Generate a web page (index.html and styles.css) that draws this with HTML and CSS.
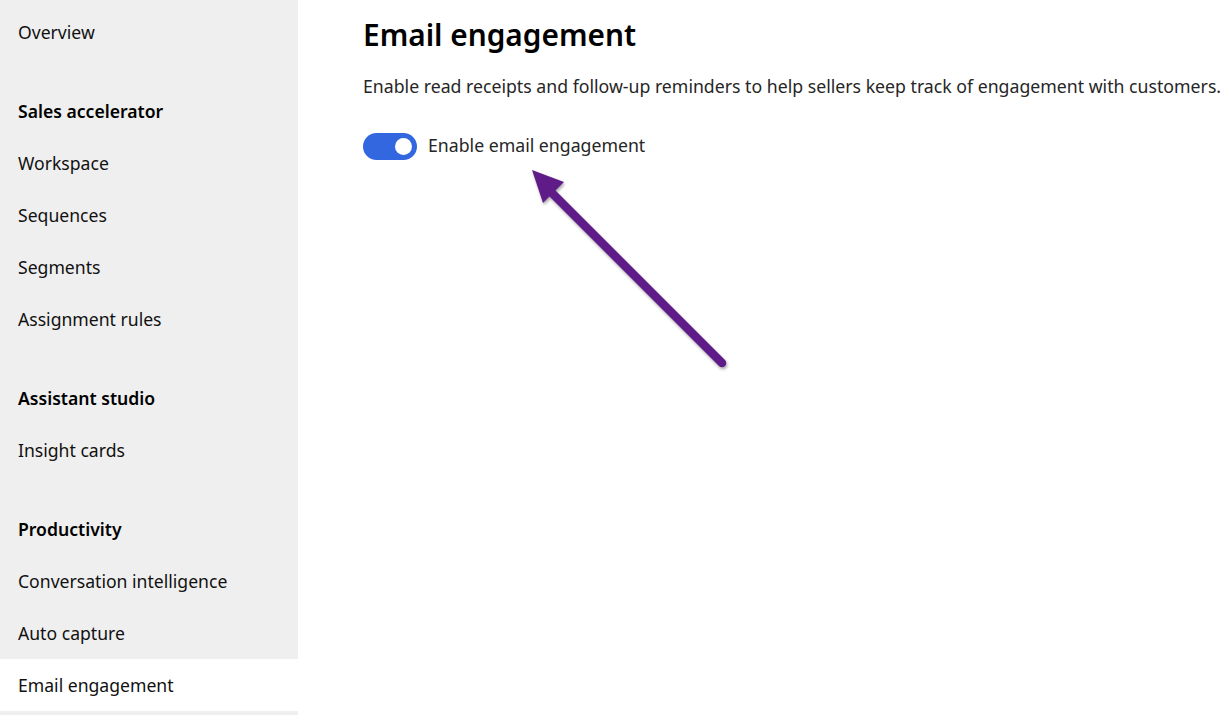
FILE: index.html
```html
<!DOCTYPE html>
<html lang="en">
<head>
<meta charset="utf-8">
<title>Email engagement</title>
<link rel="stylesheet" href="styles.css">
</head>
<body>
<div class="app">
  <nav class="sidebar">
    <div class="group first">
      <div class="item">Overview</div>
    </div>
    <div class="group">
      <div class="item header">Sales accelerator</div>
      <div class="item">Workspace</div>
      <div class="item">Sequences</div>
      <div class="item">Segments</div>
      <div class="item">Assignment rules</div>
    </div>
    <div class="group">
      <div class="item header">Assistant studio</div>
      <div class="item">Insight cards</div>
    </div>
    <div class="group">
      <div class="item header">Productivity</div>
      <div class="item">Conversation intelligence</div>
      <div class="item">Auto capture</div>
      <div class="item selected">Email engagement</div>
    </div>
  </nav>
  <main class="content">
    <h1 class="title">Email engagement</h1>
    <p class="desc">Enable read receipts and follow-up reminders to help sellers keep track of engagement with customers.</p>
    <div class="toggle-row">
      <span class="toggle"><span class="knob"></span></span>
      <span class="toggle-label">Enable email engagement</span>
    </div>
    <svg class="arrow" width="240" height="240" viewBox="0 0 240 240" aria-hidden="true">
      <defs>
        <filter id="sh" x="-20%" y="-20%" width="140%" height="140%">
          <feDropShadow dx="1" dy="2" stdDeviation="1.6" flood-color="#000" flood-opacity="0.35"/>
        </filter>
      </defs>
      <g filter="url(#sh)">
        <line x1="28" y1="29" x2="202" y2="203" stroke="#5e1f88" stroke-width="8.5" stroke-linecap="round"/>
        <polygon points="12,10 44,22 23,43" fill="#5e1f88"/>
      </g>
    </svg>
  </main>
</div>
</body>
</html>
```
FILE: styles.css
```css
html, body {
  margin: 0;
  padding: 0;
  height: 100%;
  background: #ffffff;
}
body {
  font-family: "Segoe UI", "Noto Sans", "Open Sans", sans-serif;
  color: #000;
  overflow: hidden;
}
.app {
  display: flex;
  height: 715px;
}
.sidebar {
  width: 298px;
  flex: 0 0 298px;
  background: #efefef;
  display: flex;
  flex-direction: column;
  padding-top: 6px;
  box-sizing: border-box;
}
.group {
  margin-top: 27px;
}
.group.first {
  margin-top: 0;
}
.item {
  height: 52px;
  display: flex;
  align-items: center;
  padding-left: 18px;
  font-size: 17.6px;
  color: #111;
}
.item.header {
  font-weight: 600;
  color: #000;
}
.item.selected {
  background: #ffffff;
}
.content {
  position: relative;
  flex: 1;
  padding-left: 65px;
  padding-top: 15px;
}
.title {
  margin: 0;
  font-size: 29.8px;
  font-weight: 600;
  line-height: 40px;
  color: #000;
}
.desc {
  margin: 19px 0 0;
  font-size: 17.7px;
  line-height: 24px;
  color: #262626;
}
.toggle-row {
  display: flex;
  align-items: center;
  gap: 11px;
  margin-top: 35px;
}
.toggle {
  width: 54px;
  height: 27px;
  border-radius: 14px;
  background: #3267e0;
  display: flex;
  align-items: center;
  justify-content: flex-end;
  padding-right: 5px;
  box-sizing: border-box;
}
.knob {
  width: 17px;
  height: 17px;
  border-radius: 50%;
  background: #fff;
}
.toggle-label {
  font-size: 17.7px;
  color: #262626;
  margin-top: -3px;
}
.arrow {
  position: absolute;
  left: 222px;
  top: 160px;
}
```
